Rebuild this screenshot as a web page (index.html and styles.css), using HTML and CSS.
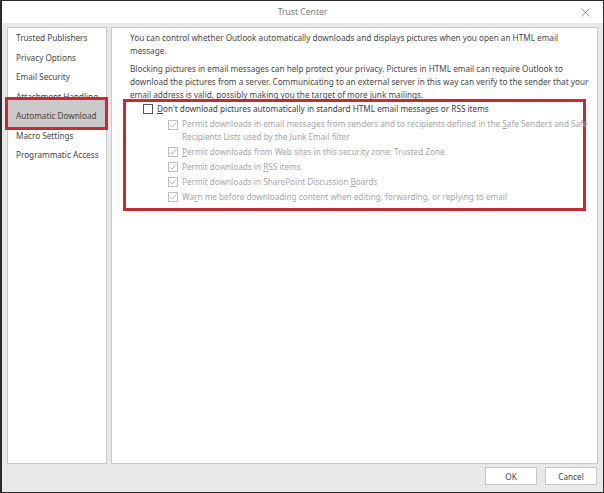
FILE: index.html
```html
<!DOCTYPE html>
<html>
<head>
<meta charset="utf-8">
<link rel="stylesheet" href="styles.css">
</head>
<body>
<div class="window">
  <div class="titlebar">
    <span class="title">Trust Center</span>
    <svg class="close" width="9" height="9" viewBox="0 0 9 9"><path d="M0.5 0.5L8.5 8.5M8.5 0.5L0.5 8.5" stroke="#8a8a8a" stroke-width="0.9" fill="none"/></svg>
  </div>
  <div class="body">
    <div class="panels">
      <ul class="nav">
        <li>Trusted Publishers</li>
        <li>Privacy Options</li>
        <li>Email Security</li>
        <li>Attachment Handling</li>
        <li class="selected">Automatic Download</li>
        <li>Macro Settings</li>
        <li>Programmatic Access</li>
      </ul>
      <div class="content">
        <p class="para">You can control whether Outlook automatically downloads and displays pictures when you open an HTML email<br>message.</p>
        <p class="para">Blocking pictures in email messages can help protect your privacy. Pictures in HTML email can require Outlook to<br>download the pictures from a server. Communicating to an external server in this way can verify to the sender that your<br>email address is valid, possibly making you the target of more junk mailings.</p>
        <div class="group">
          <div class="row main">
            <span class="box"></span>
            <span class="label"><u>D</u>on't download pictures automatically in standard HTML email messages or RSS items</span>
          </div>
          <div class="row sub">
            <span class="box checked"><svg width="8" height="8" viewBox="0 0 8 8"><path d="M1 4.2L3 6.2L7 1.6" stroke="#a8a8a8" stroke-width="0.9" fill="none"/></svg></span>
            <span class="label">Permit downloads in email messages from senders and to recipients defined in the <u>S</u>afe Senders and Safe<br>Recipients Lists used by the Junk Email filter</span>
          </div>
          <div class="row sub">
            <span class="box checked"><svg width="8" height="8" viewBox="0 0 8 8"><path d="M1 4.2L3 6.2L7 1.6" stroke="#a8a8a8" stroke-width="0.9" fill="none"/></svg></span>
            <span class="label"><u>P</u>ermit downloads from Web sites in this security zone: Trusted Zone</span>
          </div>
          <div class="row sub">
            <span class="box checked"><svg width="8" height="8" viewBox="0 0 8 8"><path d="M1 4.2L3 6.2L7 1.6" stroke="#a8a8a8" stroke-width="0.9" fill="none"/></svg></span>
            <span class="label">Permit downloads in <u>R</u>SS items</span>
          </div>
          <div class="row sub">
            <span class="box checked"><svg width="8" height="8" viewBox="0 0 8 8"><path d="M1 4.2L3 6.2L7 1.6" stroke="#a8a8a8" stroke-width="0.9" fill="none"/></svg></span>
            <span class="label">Permit downloads in SharePoint Discussion <u>B</u>oards</span>
          </div>
          <div class="row sub">
            <span class="box checked"><svg width="8" height="8" viewBox="0 0 8 8"><path d="M1 4.2L3 6.2L7 1.6" stroke="#a8a8a8" stroke-width="0.9" fill="none"/></svg></span>
            <span class="label">Wa<u>r</u>n me before downloading content when editing, forwarding, or replying to email</span>
          </div>
        </div>
      </div>
    </div>
    <div class="footer">
      <button class="btn">OK</button>
      <button class="btn">Cancel</button>
    </div>
  </div>
</div>
</body>
</html>
```
FILE: styles.css
```css
* { box-sizing: border-box; }
html, body { margin: 0; padding: 0; }
body {
  width: 604px;
  height: 493px;
  font-family: "Noto Sans", "Open Sans", sans-serif;
  font-size: 8.2px;
  color: #444;
}
.window {
  width: 604px;
  height: 493px;
  border: 1px solid #2a2a2a;
  border-left-width: 2px;
  display: flex;
  flex-direction: column;
  background: #fff;
}
.titlebar {
  height: 22px;
  background: #fff;
  position: relative;
  display: flex;
  align-items: center;
  justify-content: center;
}
.title {
  color: #7a7a7a;
  font-size: 8.6px;
}
.close {
  position: absolute;
  right: 13px;
  top: 7px;
}
.body {
  flex: 1;
  background: #e8e8e8;
  padding: 4px 5px 0 5px;
  display: flex;
  flex-direction: column;
}
.panels {
  flex: 1;
  display: flex;
  gap: 4px;
  min-height: 0;
}
.nav {
  list-style: none;
  margin: 0;
  padding: 0;
  width: 100px;
  flex-shrink: 0;
  background: #fff;
  border: 1px solid #c9c9c9;
}
.nav li {
  height: 19.5px;
  line-height: 19.5px;
  padding-left: 8px;
  white-space: nowrap;
  color: #454545;
}
.nav li.selected {
  position: relative;
  z-index: 0;
}
.nav li.selected::after {
  content: "";
  position: absolute;
  left: -3px;
  right: -2px;
  top: -9px;
  bottom: -4px;
  border: 3px solid #c62a33;
  background: #cacaca;
  z-index: -1;
}
.content {
  flex: 1;
  min-width: 0;
  background: #fff;
  border: 1px solid #c9c9c9;
  padding: 3px 11px 0 18px;
}
.para {
  margin: 0 0 5px 0;
  line-height: 13px;
  white-space: nowrap;
  color: #474747;
}
.group {
  margin: -7px 0 0 -7px;
  border: 3px solid #c62a33;
  height: 112px;
  padding: 0 0 0 17px;
}
.row {
  display: flex;
  align-items: flex-start;
  white-space: nowrap;
}
.row .label {
  line-height: 12.5px;
}
.row.main {
  height: 16px;
  padding-top: 0;
  color: #3c3c3c;
}
.row.main .label {
  line-height: 13px;
}
.row.main .box {
  border-color: #555;
}
.row.sub {
  padding-left: 25px;
  margin-bottom: 2.5px;
  color: #a6a6a6;
}
.box {
  width: 10px;
  height: 10px;
  border: 1px solid #bdbdbd;
  background: #fff;
  margin-top: 1.5px;
  margin-right: 4px;
  flex-shrink: 0;
  display: flex;
  align-items: center;
  justify-content: center;
}
.footer {
  height: 28px;
  display: flex;
  justify-content: flex-end;
  align-items: flex-start;
  gap: 8px;
  padding-top: 3px;
  padding-right: 1px;
}
.btn {
  width: 52px;
  height: 18px;
  background: #fff;
  border: 1px solid #c6c6c6;
  font-family: "Noto Sans", "Open Sans", sans-serif;
  font-size: 8.2px;
  color: #444;
  padding: 0;
}
```
